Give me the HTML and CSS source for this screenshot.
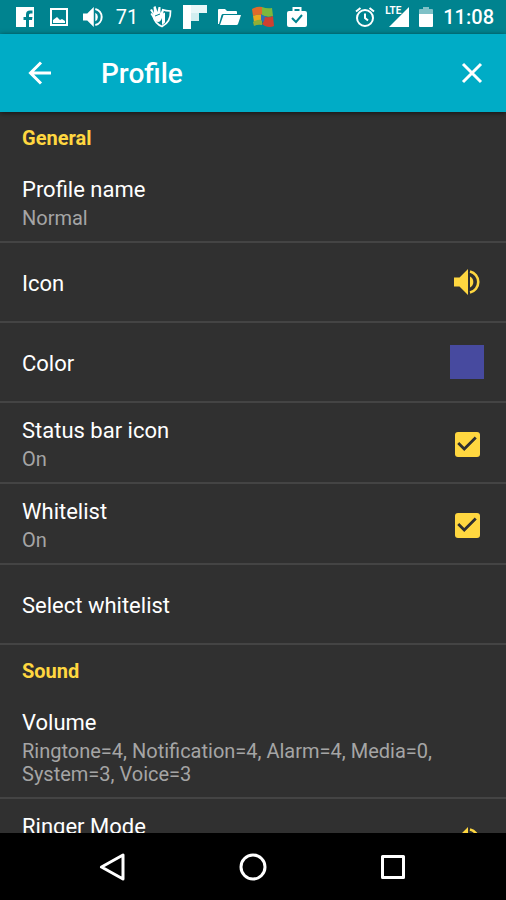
FILE: index.html
```html
<!DOCTYPE html>
<html lang="en">
<head>
<meta charset="utf-8">
<meta name="viewport" content="width=device-width, initial-scale=1">
<title>Profile</title>
<link rel="stylesheet" href="styles.css">
</head>
<body>
<svg class="sprite" aria-hidden="true">
  <symbol id="speaker" viewBox="0 0 26 26">
    <path d="M0 8.500h5.500L14 0v26L5.500 17.500H0z"/>
    <path d="M16 7.500a6.200 6.200 0 0 1 0 11z"/>
    <path d="M16 2.500a10.800 10.800 0 0 1 0 21" fill="none" stroke="currentColor" stroke-width="2.600"/>
  </symbol>
</svg>

<div class="status">
  <div class="notices">
    <svg width="20" height="20" viewBox="0 0 20 20"><path fill="#fff" d="M1 0h18v20h-5v-7h3l.5-3H14V8q0-1.500 1.500-1.500h2V3.500H15q-4 0-4 4V10H8.500v3H11v7H1z"/></svg>
    <svg width="20" height="20" viewBox="0 0 20 20"><path fill="none" stroke="#fff" stroke-width="2" d="M2 2h16v16H2z"/><path fill="#fff" d="M4 16v-3l4-3 3 3 2-1 3 2v2z"/></svg>
    <svg class="icon" width="20" height="20"><use href="#speaker"/></svg>
    <span class="count">71</span>
    <svg width="24" height="24" viewBox="0 0 24 24"><path fill="none" stroke="#fff" stroke-width="1.700" d="M13 4.500q4 1.500 8.500 1.500.5 11-8.500 15.500Q6 18.500 4.500 12"/><path fill="#fff" d="M13 9l3-1.500v10L13 20zM1 5l2-1 2 4-.5-6 2-1 2 6L9.500 2l2 0 0 6 2-4 1.500 1-2 8q-1.500 4-4 4-3.500-.5-5-4L1.500 9l1-1 2 2z"/><path fill="none" stroke="#00838f" d="M6 11l5-2"/></svg>
    <svg width="24" height="24" viewBox="0 0 24 24"><path fill="#fff" d="M0 0h8v24H0z"/><path fill="#e8f7f8" d="M8 0h16v8H8z"/><path fill="#d2eef0" d="M8 8h8v8H8z"/></svg>
    <svg width="24" height="20" viewBox="0 0 24 20"><path fill="#fff" d="M1 17V3q0-1 1-1h6l2 2h9q1 0 1 1v2H6q-1 0-1.500 1L2 17zM6.500 8H24l-3 9q-.4 1-1.500 1H3z"/></svg>
    <svg width="24" height="24" viewBox="0 0 24 24"><path fill="#e06a2b" d="M1 4q5-3 10-2v8q-5-1-9 1z"/><path fill="#7db83c" d="M11 2q5 2 10 1l1 8q-6 2-11-1z"/><path fill="#e9a81e" d="M2 11q4-2 9-1v5q-4 0-8 2z"/><path fill="#8fae35" d="M2 17q4-3 9-2v5q-4-1-8 1z"/><path fill="#2e6fb7" d="M10 9q3 3 6 2l-2 6q-3 0-4-2z"/><path fill="#cf4030" d="M14 12q4 1 8-1l1 10q-4 2-9 0l-3-2 2-3z"/></svg>
    <svg width="22" height="22" viewBox="0 0 22 22"><path fill="none" stroke="#fff" stroke-width="2" d="M7.500 6V2h7v4"/><rect x="1" y="5" width="20" height="16" rx="2" fill="#fff"/><path fill="none" stroke="#00838f" stroke-width="2" d="m6 12 4 4 6-7"/></svg>
  </div>
  <div class="system">
    <svg width="20" height="20" viewBox="0 0 20 20" fill="none" stroke="#fff" stroke-width="2"><circle cx="10" cy="11" r="8"/><path d="M10 6.500V11l3 2.500M1 4.500 5.500 1M19 4.500 14.500 1"/></svg>
    <span class="signal"><span class="lte">LTE</span><svg width="20" height="20" viewBox="0 0 20 20"><path fill="#fff" d="M20 0v20H0z"/></svg></span>
    <svg width="14" height="20" viewBox="0 0 14 20"><path fill="#7fc1c7" d="M4 0h6v2h3q1 0 1 1v4H0V3q0-1 1-1h3z"/><path fill="#fff" d="M0 7h14v12q0 1-1 1H1q-1 0-1-1z"/></svg>
    <time class="clock">11:08</time>
  </div>
</div>

<header class="appbar">
  <button type="button" aria-label="Back"><svg width="24" height="24" viewBox="0 0 24 24" fill="none" stroke="#fff" stroke-width="3"><path d="M23 12H3M13 1.500 2.500 12 13 22.500"/></svg></button>
  <h1>Profile</h1>
  <button type="button" aria-label="Close"><svg width="24" height="24" viewBox="0 0 24 24" fill="none" stroke="#fff" stroke-width="3"><path d="m3 3 18 18M21 3 3 21"/></svg></button>
</header>

<main class="settings">
  <h2>General</h2>
  <div class="row double">
    <div class="text"><span class="title">Profile name</span><span class="summary">Normal</span></div>
  </div>
  <div class="row single">
    <div class="text"><span class="title">Icon</span></div>
    <div class="widget"><svg class="icon" width="26" height="26"><use href="#speaker"/></svg></div>
  </div>
  <div class="row single">
    <div class="text"><span class="title">Color</span></div>
    <div class="widget swatch"></div>
  </div>
  <div class="row double">
    <label class="text" for="statusicon"><span class="title">Status bar icon</span><span class="summary">On</span></label>
    <div class="widget"><input type="checkbox" id="statusicon" checked></div>
  </div>
  <div class="row double">
    <label class="text" for="whitelist"><span class="title">Whitelist</span><span class="summary">On</span></label>
    <div class="widget"><input type="checkbox" id="whitelist" checked></div>
  </div>
  <div class="row single">
    <div class="text"><span class="title">Select whitelist</span></div>
  </div>
  <h2>Sound</h2>
  <div class="row double">
    <div class="text"><span class="title">Volume</span><span class="summary">Ringtone=4, Notification=4, Alarm=4, Media=0, System=3, Voice=3</span></div>
  </div>
  <div class="row double">
    <div class="text"><span class="title">Ringer Mode</span></div>
    <div class="widget"><svg class="icon" width="26" height="26"><use href="#speaker"/></svg></div>
  </div>
</main>

<nav class="navbar">
  <button type="button" aria-label="Back"><svg width="28" height="28" viewBox="0 0 28 28"><path d="M24 2v24L2.500 14z"/></svg></button>
  <button type="button" aria-label="Home"><svg width="28" height="28" viewBox="0 0 28 28"><circle cx="14" cy="14" r="12"/></svg></button>
  <button type="button" aria-label="Recent apps"><svg width="28" height="28" viewBox="0 0 28 28"><rect x="3.500" y="3.500" width="21" height="21"/></svg></button>
</nav>
</body>
</html>
```
FILE: styles.css
```css
* {
  box-sizing: border-box;
}

body {
  margin: 0;
  height: 100vh;
  display: flex;
  flex-direction: column;
  overflow: hidden;
  background: #303030;
  color: #fff;
  font-family: Roboto, sans-serif;
}

svg {
  display: block;
  flex: none;
}

button {
  display: grid;
  place-items: center;
  padding: 0;
  border: 0;
  background: none;
}

.sprite {
  display: none;
}

.icon {
  fill: currentColor;
}

.status {
  flex: none;
  display: flex;
  justify-content: space-between;
  align-items: center;
  height: 34px;
  padding: 0 12px 0 8px;
  background: #00838f;
}

.notices {
  display: grid;
  grid-template-columns: repeat(9, 34px);
  place-items: center;
}

.count {
  font-size: 20px;
}

.system {
  display: flex;
  align-items: center;
  gap: 10px;
}

.signal {
  position: relative;
  padding-left: 4px;
}

.lte {
  position: absolute;
  left: 0;
  top: -1px;
  font: bold 10px/10px "Liberation Sans Narrow", Roboto, sans-serif;
}

.clock {
  font-size: 20px;
  font-weight: 500;
}

.appbar {
  position: relative;
  flex: none;
  display: flex;
  align-items: center;
  height: 78px;
  padding: 0 10px 0 16px;
  background: #00acc6;
  box-shadow: 0 1px 5px rgba(0, 0, 0, 0.6);
}

.appbar button {
  width: 48px;
  height: 48px;
}

.appbar h1 {
  flex: 1;
  margin: 0;
  padding-left: 37px;
  font-size: 28px;
  font-weight: 500;
}

.settings {
  flex: 1;
  min-height: 0;
  overflow: hidden;
}

.settings h2 {
  height: 50px;
  margin: 0;
  padding: 14px 22px 0;
  color: #ffd740;
  font-size: 20px;
  line-height: 24px;
  font-weight: 700;
}

.row {
  display: flex;
  align-items: center;
  min-height: 80px;
  padding: 0 22px;
  border-bottom: 2px solid #444;
}

.double {
  min-height: 81px;
  padding-top: 14px;
  padding-bottom: 11px;
}

.text {
  flex: 1;
  align-self: flex-start;
  display: flex;
  flex-direction: column;
  gap: 3px;
}

.single .text {
  align-self: center;
  padding-top: 3px;
}

.title {
  font-size: 22px;
  line-height: 28px;
}

.summary {
  color: #a5a5a5;
  font-size: 20px;
  line-height: 23px;
}

.widget {
  display: grid;
  place-items: center;
  width: 34px;
  height: 34px;
  color: #ffd740;
}

.swatch {
  background: #474a9f;
}

input[type="checkbox"] {
  appearance: none;
  width: 25px;
  height: 25px;
  margin: 0;
  border-radius: 3px;
  background: #ffd740;
}

input[type="checkbox"]:checked::before {
  content: "";
  display: block;
  height: 100%;
  background: #303030;
  clip-path: polygon(39% 78%, 11% 50%, 19% 42%, 39% 62%, 81% 20%, 89% 28%);
}

.navbar {
  flex: none;
  display: flex;
  justify-content: center;
  gap: 92px;
  height: 67px;
  background: #000;
}

.navbar button {
  width: 48px;
}

.navbar svg {
  fill: none;
  stroke: #fff;
  stroke-width: 3px;
  stroke-linejoin: round;
}
```
